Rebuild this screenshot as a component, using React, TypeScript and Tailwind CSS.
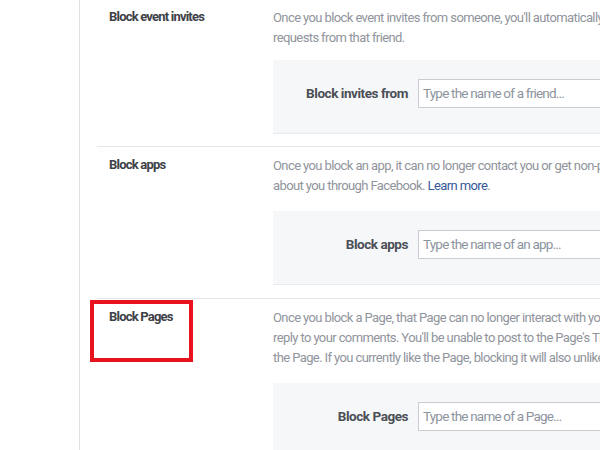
const rows = [
  {
    title: "Block event invites",
    lines: [
      "Once you block event invites from someone, you'll automatically ignore future event",
      "requests from that friend.",
    ],
    field: "Block invites from",
    placeholder: "Type the name of a friend...",
  },
  {
    title: "Block apps",
    lines: [
      "Once you block an app, it can no longer contact you or get non-public information",
      "about you through Facebook.",
    ],
    link: "Learn more",
    field: "Block apps",
    placeholder: "Type the name of an app...",
  },
  {
    title: "Block Pages",
    lines: [
      "Once you block a Page, that Page can no longer interact with your posts or like or",
      "reply to your comments. You'll be unable to post to the Page's Timeline or message",
      "the Page. If you currently like the Page, blocking it will also unlike it.",
    ],
    field: "Block Pages",
    placeholder: "Type the name of a Page...",
    marked: true,
  },
];

type Row = (typeof rows)[number] & { link?: string; marked?: boolean };

const BlockRow = ({ row, first }: { row: Row; first: boolean }) => {
  return (
    <div
      className={`relative flex w-[800px] ${first ? "pt-[8px] pb-3" : "pt-[9px] pb-[13px] border-t border-[#e5e6e9]"}`}
    >
      {/* annotation */}
      {row.marked && (
        <div className="absolute left-[-7px] top-[1px] w-[103px] h-[62px] border-[4px] border-[#e8131d]" />
      )}
      <div className="w-[176px] shrink-0 pl-3 -mt-[1px]">
        <h3 className="text-[13px] leading-5 font-bold text-[#3e4147] tracking-[-0.8px]">
          {row.title}
        </h3>
      </div>
      <div className="flex-1 flex flex-col">
        <div className="text-[13px] leading-5 text-[#90949c] tracking-[-0.6px]">
          {row.lines.map((line, i) => (
            <div key={i} className="whitespace-nowrap">
              {line}
              {row.link && i === row.lines.length - 1 && (
                <>
                  {" "}
                  <span className="text-[#365899]">{row.link}</span>.
                </>
              )}
            </div>
          ))}
        </div>

        {/* input panel */}
        <div
          className={`${first ? "mt-[12px]" : "mt-[15px]"} flex items-center bg-[#f6f7f9] border-b border-[#e9eaed] pt-[19px] pb-[25px]`}
        >
          <div className="w-[135px] shrink-0 text-right text-[13.5px] font-bold text-[#4b4f56] tracking-[-0.45px]">
            {row.field}
          </div>
          <div className="ml-[10px] w-[260px] h-[29px] flex items-center bg-white border border-[#c9ccd1] pl-[4px] text-[13.5px] text-[#8d949e] tracking-[-0.8px]">
            {row.placeholder}
          </div>
        </div>
      </div>
    </div>
  );
};

const App = () => {
  return (
    <div
      className="flex w-[600px] h-[450px] overflow-hidden bg-white"
      style={{ fontFamily: "Roboto, 'Liberation Sans', sans-serif" }}
    >
      <div className="w-[80px] shrink-0 border-r border-[#dddfe2]" />
      <div className="flex-1 min-w-0 overflow-hidden pl-[17px]">
        {rows.map((row, i) => (
          <BlockRow key={i} row={row} first={i === 0} />
        ))}
      </div>
    </div>
  );
};

export default App;
